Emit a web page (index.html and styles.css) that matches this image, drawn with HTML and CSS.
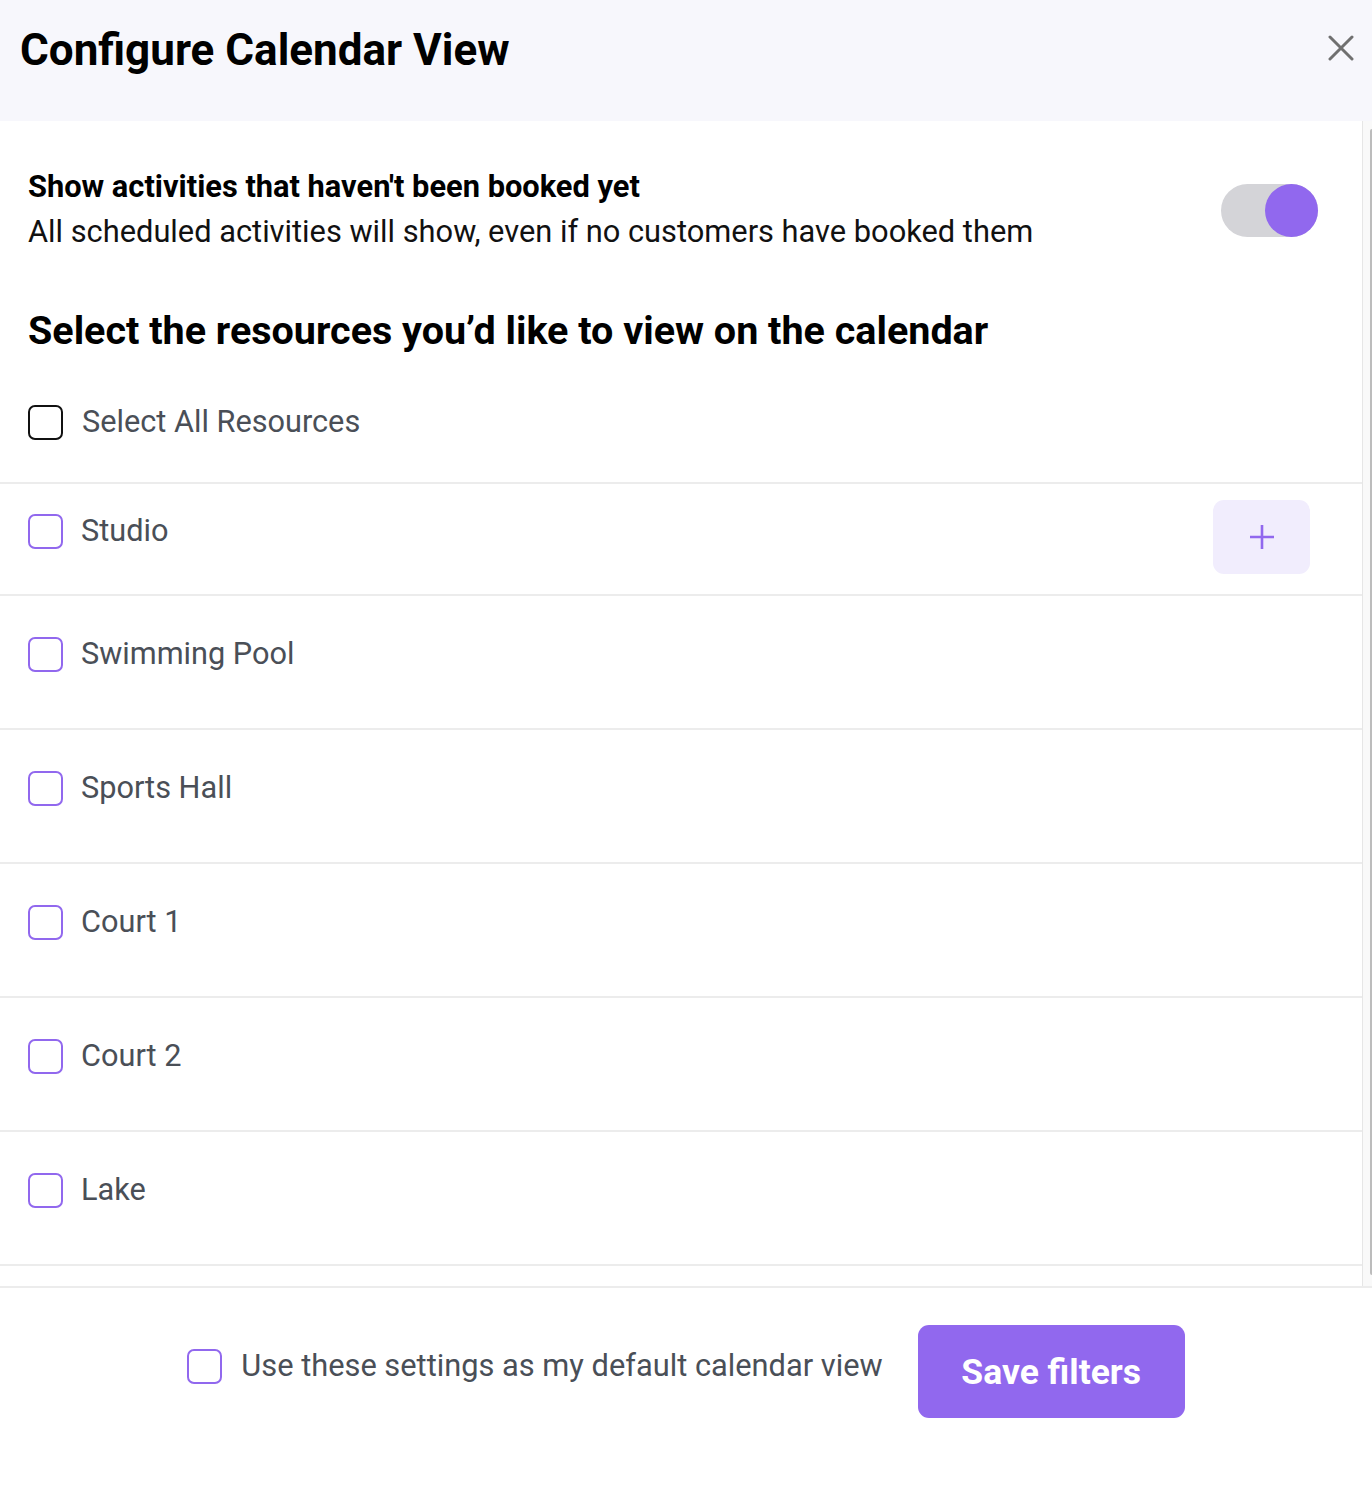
FILE: index.html
```html
<!DOCTYPE html>
<html lang="en">
<head>
<meta charset="utf-8">
<title>Configure Calendar View</title>
<link rel="stylesheet" href="styles.css">
</head>
<body>
<div class="modal">
  <header class="modal-header">
    <h1 class="modal-title">Configure Calendar View</h1>
    <button class="close-btn" aria-label="Close">
      <svg width="26" height="26" viewBox="0 0 26 26"><path d="M2 2 L24 24 M24 2 L2 24" stroke="#707070" stroke-width="3" stroke-linecap="round" fill="none"/></svg>
    </button>
  </header>

  <div class="modal-body">
    <div class="body-content">
      <section class="toggle-section">
        <div class="toggle-text">
          <div class="toggle-title">Show activities that haven't been booked yet</div>
          <div class="toggle-desc">All scheduled activities will show, even if no customers have booked them</div>
        </div>
        <div class="toggle on"><span class="knob"></span></div>
      </section>

      <h2 class="resources-heading">Select the resources you’d like to view on the calendar</h2>

      <div class="select-all">
        <span class="checkbox black"></span>
        <span class="item-label">Select All Resources</span>
      </div>

      <ul class="resource-list">
        <li class="resource-row first">
          <div class="resource-main">
            <span class="checkbox"></span>
            <span class="item-label">Studio</span>
          </div>
          <button class="add-btn" aria-label="Add">
            <svg width="28" height="28" viewBox="0 0 28 28"><path d="M14 2 V26 M2 14 H26" stroke="#9168ee" stroke-width="2.6" fill="none"/></svg>
          </button>
        </li>
        <li class="resource-row"><div class="resource-main"><span class="checkbox"></span><span class="item-label">Swimming Pool</span></div></li>
        <li class="resource-row"><div class="resource-main"><span class="checkbox"></span><span class="item-label">Sports Hall</span></div></li>
        <li class="resource-row"><div class="resource-main"><span class="checkbox"></span><span class="item-label">Court 1</span></div></li>
        <li class="resource-row"><div class="resource-main"><span class="checkbox"></span><span class="item-label">Court 2</span></div></li>
        <li class="resource-row"><div class="resource-main"><span class="checkbox"></span><span class="item-label">Lake</span></div></li>
      </ul>
      <div class="list-end"></div>
    </div>
    <div class="scrollbar"><div class="thumb"></div></div>
  </div>

  <footer class="modal-footer">
    <label class="default-check">
      <span class="checkbox"></span>
      <span class="footer-label">Use these settings as my default calendar view</span>
    </label>
    <button class="save-btn">Save filters</button>
  </footer>
</div>
</body>
</html>
```

FILE: styles.css
```css
* { box-sizing: border-box; }
html, body { margin: 0; padding: 0; }
body {
  font-family: Roboto, "Liberation Sans", Arial, sans-serif;
  background: #ffffff;
  color: #000;
  width: 1372px;
  height: 1486px;
  overflow: hidden;
}
.modal {
  display: flex;
  flex-direction: column;
  height: 1486px;
}
.modal-header {
  height: 121px;
  flex: none;
  background: #f7f7fc;
  display: flex;
  align-items: flex-start;
  justify-content: space-between;
  padding: 0 18px 0 20px;
}
.modal-title {
  margin: 24px 0 0;
  font-size: 44px;
  font-weight: 700;
  line-height: 52px;
}
.close-btn {
  margin-top: 35px;
  border: 0;
  background: transparent;
  padding: 0;
  width: 26px;
  height: 26px;
  cursor: pointer;
}
.modal-body {
  height: 1167px;
  flex: none;
  display: flex;
  border-bottom: 2px solid #ececec;
}
.body-content {
  flex: 1;
  min-width: 0;
  overflow: hidden;
}
.scrollbar {
  width: 10px;
  flex: none;
  background: #f9f9f9;
  border-left: 1px solid #e6e6e6;
  padding: 8px 0 11px 7px;
}
.thumb {
  height: 100%;
  background: #bcbcbc;
  border-radius: 2px 0 0 2px;
}
.toggle-section {
  display: flex;
  align-items: center;
  justify-content: space-between;
  padding: 44px 44px 0 28px;
}
.toggle-title {
  font-size: 30.8px;
  font-weight: 700;
  line-height: 44px;
}
.toggle-desc {
  font-size: 30.8px;
  line-height: 45px;
  color: #111;
}
.toggle {
  width: 97px;
  height: 53px;
  border-radius: 27px;
  background: #d4d4d8;
  position: relative;
  flex: none;
  margin-top: 1px;
}
.toggle .knob {
  position: absolute;
  right: 0;
  top: 0;
  width: 53px;
  height: 53px;
  border-radius: 50%;
  background: #9168ee;
}
.resources-heading {
  margin: 52px 0 0;
  padding-left: 28px;
  font-size: 39.5px;
  font-weight: 700;
  line-height: 50px;
}
.select-all {
  display: flex;
  align-items: center;
  gap: 19px;
  padding: 48px 28px 42px;
  border-bottom: 2px solid #ececec;
}
.checkbox {
  width: 35px;
  height: 35px;
  border: 2px solid #9168ee;
  border-radius: 7px;
  flex: none;
  display: inline-block;
  background: #fff;
}
.checkbox.black { border-color: #111; }
.item-label {
  font-size: 30.7px;
  line-height: 36px;
  color: #4a4f57;
}
.resource-list {
  list-style: none;
  margin: 0;
  padding: 0;
}
.resource-row {
  display: flex;
  align-items: flex-start;
  justify-content: space-between;
  height: 134px;
  padding: 40px 28px 0;
  border-bottom: 2px solid #ececec;
}
.resource-row.first {
  height: 112px;
  padding: 16px 52px 0 28px;
}
.resource-row.first .resource-main { margin-top: 13px; }
.resource-main {
  display: flex;
  align-items: center;
  gap: 18px;
}
.add-btn {
  width: 97px;
  height: 74px;
  border: 0;
  border-radius: 11px;
  background: #f1edfd;
  display: flex;
  align-items: center;
  justify-content: center;
  padding: 0;
  cursor: pointer;
}
.list-end { height: 40px; }
.modal-footer {
  flex: 1;
  display: flex;
  align-items: flex-start;
  justify-content: center;
  gap: 35px;
  padding: 37px 0 0;
}
.default-check {
  display: flex;
  align-items: center;
  gap: 19px;
  margin-top: 21px;
  cursor: pointer;
}
.footer-label {
  font-size: 30.8px;
  line-height: 40px;
  color: #4a4f57;
}
.save-btn {
  width: 267px;
  height: 93px;
  border: 0;
  border-radius: 11px;
  background: #9168ee;
  color: #fff;
  font-family: Roboto, "Liberation Sans", Arial, sans-serif;
  font-size: 35.5px;
  font-weight: 700;
  cursor: pointer;
}
```
